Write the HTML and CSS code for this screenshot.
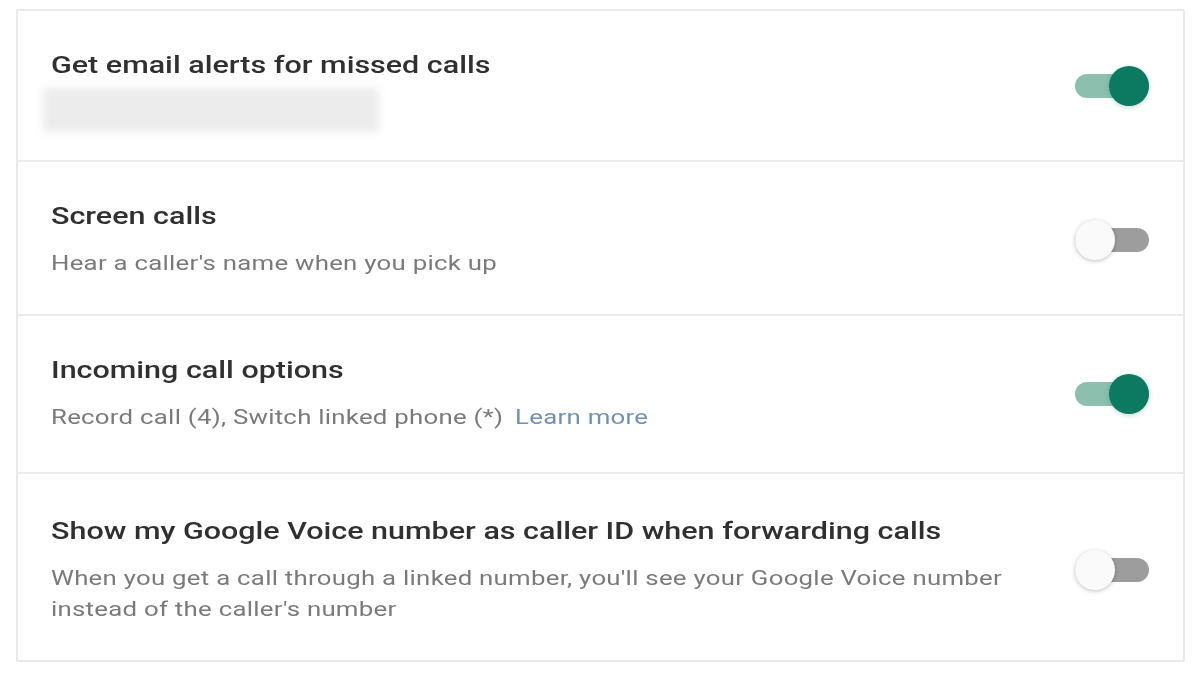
FILE: index.html
```html
<!DOCTYPE html>
<html lang="en">
<head>
  <meta charset="UTF-8" />
  <title>Calls settings</title>
  <link rel="stylesheet" href="styles.css">
</head>
<body>
  <div class="settings">
    <div class="row row-first">
      <div class="text">
        <div class="title">Get email alerts for missed calls</div>
        <div class="email-redacted"></div>
      </div>
      <span class="toggle on"><span class="thumb"></span></span>
    </div>

    <div class="row">
      <div class="text">
        <div class="title">Screen calls</div>
        <div class="desc">Hear a caller's name when you pick up</div>
      </div>
      <span class="toggle"><span class="thumb"></span></span>
    </div>

    <div class="row row-tall">
      <div class="text">
        <div class="title">Incoming call options</div>
        <div class="desc">Record call (4), Switch linked phone (*) <a class="link" href="#">Learn more</a></div>
      </div>
      <span class="toggle on"><span class="thumb"></span></span>
    </div>

    <div class="row row-last">
      <div class="text">
        <div class="title">Show my Google Voice number as caller ID when forwarding calls</div>
        <div class="desc">When you get a call through a linked number, you'll see your Google Voice number<br>instead of the caller's number</div>
      </div>
      <span class="toggle"><span class="thumb"></span></span>
    </div>
  </div>
</body>
</html>
```

FILE: styles.css
```css
body {
  margin: 0;
  background: #fff;
  font-family: Roboto, 'Liberation Sans', sans-serif;
}
.settings {
  margin: 9px 15px 0 16px;
  border: 2px solid #e9e9e9;
  border-radius: 2px;
}
.row {
  display: flex;
  align-items: center;
  justify-content: space-between;
  padding: 38px 34px 35px 33px;
  border-top: 2px solid #ebebeb;
}
.row:first-child {
  border-top: none;
}
.row-first {
  padding-bottom: 28px;
}
.row-first .toggle {
  margin-bottom: 9px;
}
.row-tall {
  padding-bottom: 39px;
}
.row-last {
  padding-top: 41px;
}
/* the type is set wide, so stretch it horizontally */
.title,
.desc {
  transform-origin: left center;
  white-space: nowrap;
}
.title {
  font-size: 24px;
  font-weight: 500;
  line-height: 32px;
  color: #303030;
  transform: scaleX(1.27);
}
.desc {
  margin-top: 16px;
  font-size: 20px;
  line-height: 31px;
  color: #7a7a7a;
  letter-spacing: 0.2px;
  transform: scaleX(1.29);
}
.link {
  color: #7090b5;
  text-decoration: none;
  margin-left: 4px;
}
.email-redacted {
  margin: 7px 0 0 -8px;
  width: 336px;
  height: 44px;
  background: #ececec;
  filter: blur(4px);
}
/* Switch */
.toggle {
  position: relative;
  flex: none;
  width: 74px;
  height: 24px;
  border-radius: 12px;
  background: #9d9d9d;
}
.toggle .thumb {
  position: absolute;
  top: -8px;
  left: 0;
  width: 40px;
  height: 40px;
  border-radius: 50%;
  background: #fafafa;
  box-shadow: 0 1px 4px rgba(0, 0, 0, 0.25);
}
.toggle.on {
  background: #8cbfad;
}
.toggle.on .thumb {
  left: auto;
  right: 0;
  background: #0b7a61;
  box-shadow: 0 1px 5px rgba(11, 122, 97, 0.3);
}
```
